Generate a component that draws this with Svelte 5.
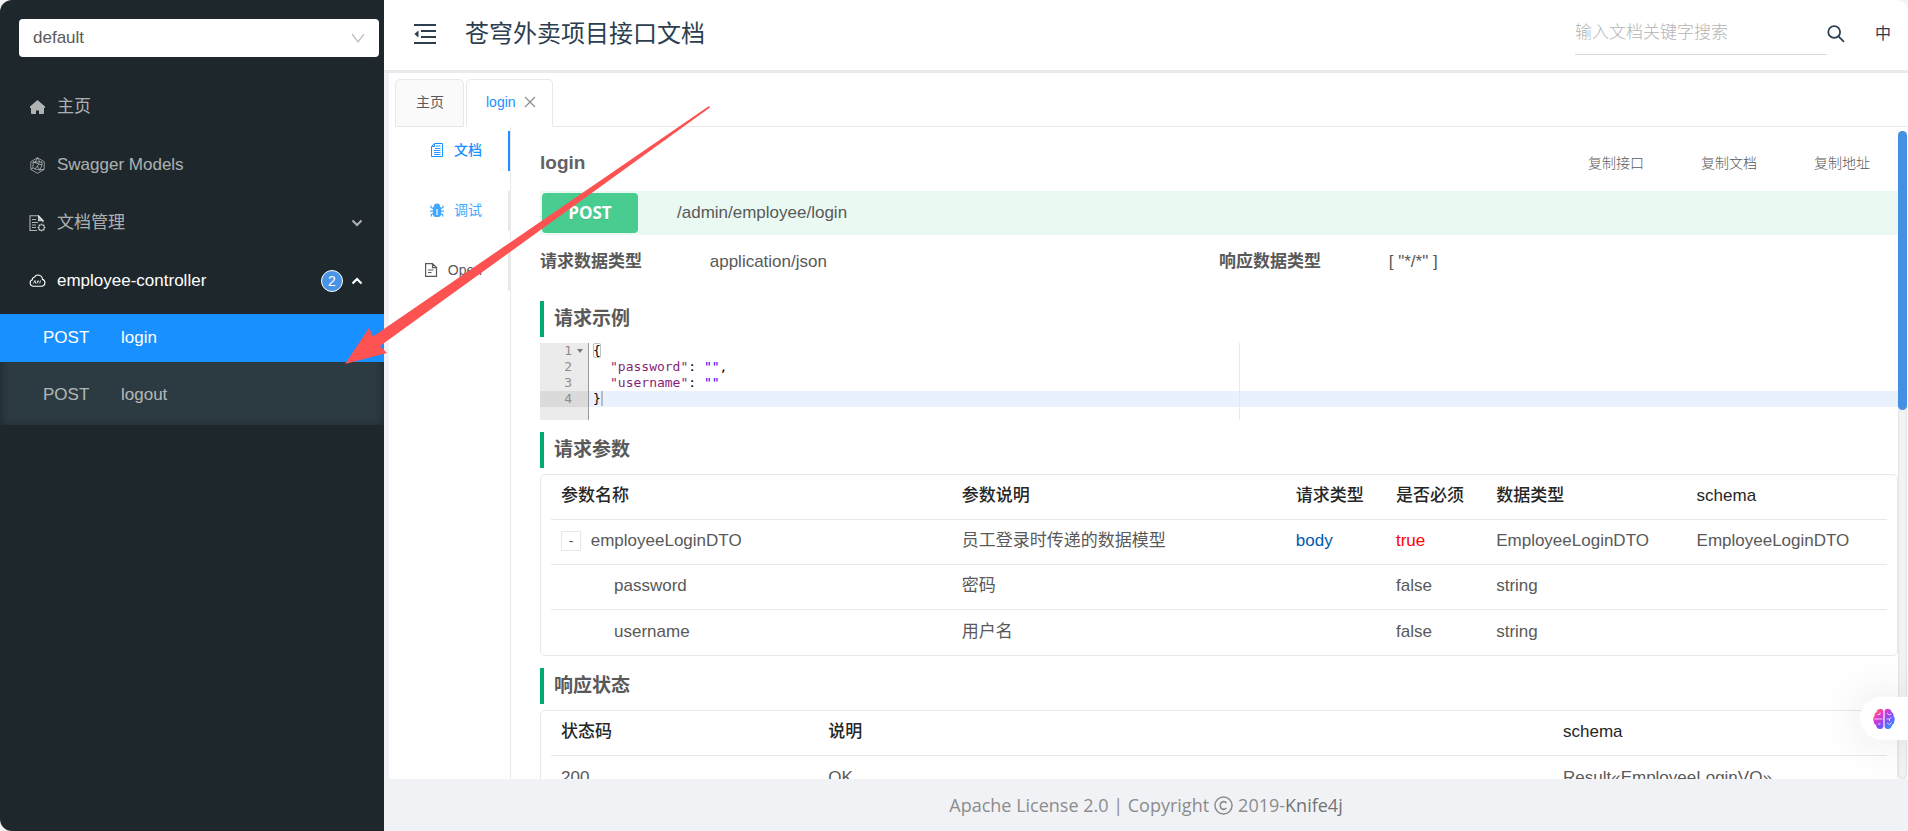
<script>
  let service = $state("default");
  let keyword = $state("");
  let activeApi = $state("login");
  let expanded = $state(true);

  const apis = [
    { method: "POST", name: "login" },
    { method: "POST", name: "logout" },
  ];

  const copyActions = ["复制接口", "复制文档", "复制地址"];

  const params = [
    {
      name: "employeeLoginDTO",
      desc: "员工登录时传递的数据模型",
      in: "body",
      required: true,
      type: "EmployeeLoginDTO",
      schema: "EmployeeLoginDTO",
    },
    { name: "password", desc: "密码", in: "", required: false, type: "string", schema: "", child: true },
    { name: "username", desc: "用户名", in: "", required: false, type: "string", schema: "", child: true },
  ];

  let rows = $derived(params.filter((p) => expanded || !p.child));

  const responses = [{ code: 200, desc: "OK", schema: "Result«EmployeeLoginVO»" }];
</script>

<div class="layout">
  <aside class="sider">
    <div class="service">
      <select bind:value={service} aria-label="service">
        <option>default</option>
      </select>
      <svg class="select-arrow" viewBox="0 0 14 14" width="14" height="14">
        <path d="M1 3l6 8 6-8" fill="none" stroke="#bfbfbf" stroke-width="1.3" />
      </svg>
    </div>

    <nav class="menu">
      <a class="menu-item" href="#home">
        <svg viewBox="0 0 17 17" width="17" height="17">
          <path d="M8.500 1L1 7.500V9h1v5q0 1 1 1h4v-3.500h3V15h4q1 0 1-1V9h1V7.500z" fill="currentColor" />
        </svg>
        <span>主页</span>
      </a>
      <a class="menu-item" href="#models">
        <svg viewBox="0 0 17 17" width="17" height="17" fill="none" stroke="currentColor" stroke-width=".8">
          <path d="M8.500 .8l6.700 3.900v7.700l-6.700 3.900-6.700-3.900V4.700z" />
          <path d="M8.500 .8L6 5.500M8.500 .8L11 5.500M4 5h9v3l-3-1-4 5-2-1zM4 5l6 2M8 9l3 4 2-5M6 12l5 1M2 12.400l2-1.400M15 12.400l-4 .6" />
        </svg>
        <span>Swagger Models</span>
      </a>
      <a class="menu-item" href="#docs">
        <svg viewBox="0 0 17 17" width="17" height="17" fill="none" stroke="currentColor" stroke-width="1.1">
          <path d="M8 15.500H1V.8h8.500L14 5.500v2" />
          <path d="M9.500 .8v5H14z" fill="currentColor" />
          <path d="M3 4.500h4M3 7.500h6M3 10h4M3 12.500h4" />
          <circle cx="12.500" cy="12.500" r="2.800" />
          <path d="M12.500 8.500v1.300M12.500 15.200v1.300M8.500 12.500h1.300M15.200 12.500h1.300M9.700 9.700l.9.900M14.400 14.400l.9.900M9.700 15.300l.9-.9M14.400 10.600l.9-.9" />
        </svg>
        <span class="grow">文档管理</span>
        <svg class="caret" viewBox="0 0 12 12" width="12" height="12">
          <path d="M1.500 3.500L6 8l4.500-4.500" fill="none" stroke="currentColor" stroke-width="2" />
        </svg>
      </a>
      <a class="menu-item open" href="#employee">
        <svg viewBox="0 0 17 17" width="17" height="17" fill="none" stroke="currentColor" stroke-width="1.1">
          <path d="M4 13.200a3.300 3.300 0 0 1-.6-6.400 2.200 2.200 0 0 1 2-2.600 4.300 4.300 0 0 1 8 2.200 3.500 3.500 0 0 1-.4 6.800z" />
          <path d="M4.500 10.500l1.500-3 .8 3M8 10.500l.8-2.700 1 .5-1 1M11.500 7.500l-.8 3" stroke-width=".8" />
        </svg>
        <span class="grow">employee-controller</span>
        <span class="badge">2</span>
        <svg class="caret" viewBox="0 0 12 12" width="12" height="12">
          <path d="M1.500 8.500L6 4l4.500 4.500" fill="none" stroke="currentColor" stroke-width="2.200" />
        </svg>
      </a>
      <div class="submenu">
        {#each apis as api}
          <a
            class="sub-item"
            class:active={activeApi === api.name}
            href="#{api.name}"
            onclick={() => (activeApi = api.name)}
          >
            <span class="method">{api.method}</span>
            <span>{api.name}</span>
          </a>
        {/each}
      </div>
    </nav>
  </aside>

  <div class="main">
    <header>
      <button class="icon-btn" aria-label="menu fold">
        <svg viewBox="0 0 22 20" width="22" height="20" fill="none" stroke="currentColor" stroke-width="1.800">
          <path d="M0 1h22M7 7h15M7 13h15M0 19h22" />
          <path d="M4.500 6.500v7L.3 10z" fill="currentColor" stroke="none" />
        </svg>
      </button>
      <h1>苍穹外卖项目接口文档</h1>
      <input class="search" type="text" placeholder="输入文档关键字搜索" aria-label="search" bind:value={keyword} />
      <button class="icon-btn" aria-label="search">
        <svg viewBox="0 0 18 18" width="18" height="18" fill="none" stroke="currentColor" stroke-width="1.800">
          <circle cx="7.200" cy="7" r="5.900" />
          <path d="M11.500 11.300l5.500 5.500" />
        </svg>
      </button>
      <button class="lang">中</button>
    </header>

    <div class="page">
      <div class="tabs">
        <button class="tab">主页</button>
        <button class="tab current">
          login
          <svg viewBox="0 0 12 12" width="12" height="12">
            <path d="M1 1l10 10M11 1L1 11" stroke="#8c8c8c" stroke-width="1.200" />
          </svg>
        </button>
        <div class="tabs-rest"></div>
      </div>

      <div class="workspace">
        <div class="side-tabs">
          <button class="side-tab selected">
            <svg viewBox="0 0 14 14" width="14" height="14" fill="none" stroke="currentColor">
              <path d="M4.500 .5h8v13H9.500M4.500 .5l-3 3v10h9M4.500 .5v3h-3" />
              <path d="M5.500 3h5M5 5.500h5.500M4 7.500h6.500M4 9.500h6.500M4 11.500h6.500" stroke-width=".9" />
            </svg>
            文档
          </button>
          <button class="side-tab hover">
            <svg viewBox="0 0 14 14" width="14" height="14" fill="none" stroke="currentColor" stroke-width="1.200">
              <path d="M3.500 4.500h7V11a3.500 2.500 0 0 1-7 0z" fill="currentColor" />
              <path d="M4.500 3.500a2.500 2.500 0 0 1 5 0z" fill="currentColor" />
              <path d="M3 5.500L1 4.500V2.500M11 5.500l2-1V2.500M3 8.200H0M11 8.200h3M3.500 10.500L1.300 11.500v2M10.500 10.500l2.200 1v2" />
              <path d="M7 6v6" stroke="#fff" />
            </svg>
            调试
          </button>
          <button class="side-tab">
            <svg viewBox="0 0 14 14" width="14" height="14" fill="none" stroke="currentColor" stroke-width="1.200">
              <path d="M1.600 .6H8.500l4 4v8.800H1.600zM8.500 .6v4h4" />
              <path d="M4 7h5.500M4 9.500h3.500" />
            </svg>
            Open
          </button>
        </div>

        <div class="content">
          <div class="title-row">
            <h2>login</h2>
            {#each copyActions as action}
              <button class="copy">{action}</button>
            {/each}
          </div>

          <div class="api-bar">
            <span class="verb">POST</span>
            <span>/admin/employee/login</span>
          </div>

          <dl class="types">
            <dt>请求数据类型</dt>
            <dd>application/json</dd>
            <dt>响应数据类型</dt>
            <dd>[ "*/*" ]</dd>
          </dl>

          <h3>请求示例</h3>
          <div class="editor">
            <div class="gutter">
              <div>1<i class="fold"></i></div>
              <div>2</div>
              <div>3</div>
              <div class="line-on">4</div>
            </div>
            <div class="code">
              <div><span class="bracket">{"{"}</span></div>
              <div class="indent"><span class="key">"password"</span>: <span class="str">""</span>,</div>
              <div class="indent"><span class="key">"username"</span>: <span class="str">""</span></div>
              <div class="line-on">{"}"}<span class="cursor"></span></div>
              <div class="print-margin"></div>
            </div>
          </div>

          <h3>请求参数</h3>
          <div class="card">
            <table>
              <thead>
                <tr>
                  <th class="w30">参数名称</th>
                  <th class="w25">参数说明</th>
                  <th class="w7">请求类型</th>
                  <th class="w7">是否必须</th>
                  <th class="w15">数据类型</th>
                  <th class="w15">schema</th>
                </tr>
              </thead>
              <tbody>
                {#each rows as row}
                  <tr>
                    <td class:child={row.child}>
                      {#if !row.child}
                        <button class="expand" onclick={() => (expanded = !expanded)}>{expanded ? "-" : "+"}</button>
                      {/if}
                      {row.name}
                    </td>
                    <td>{row.desc}</td>
                    <td class="in-body">{row.in}</td>
                    <td class:required={row.required}>{row.required}</td>
                    <td>{row.type}</td>
                    <td>{row.schema}</td>
                  </tr>
                {/each}
              </tbody>
            </table>
          </div>

          <h3>响应状态</h3>
          <div class="card">
            <table>
              <thead>
                <tr>
                  <th class="w20">状态码</th>
                  <th class="w55">说明</th>
                  <th class="w25">schema</th>
                </tr>
              </thead>
              <tbody>
                {#each responses as res}
                  <tr>
                    <td>{res.code}</td>
                    <td>{res.desc}</td>
                    <td>{res.schema}</td>
                  </tr>
                {/each}
              </tbody>
            </table>
          </div>
        </div>

        <div class="scrollbar"><div class="thumb"></div></div>
      </div>
    </div>

    <footer>
      <span>Apache License 2.0 | Copyright</span>
      <svg viewBox="0 0 20 20" width="19" height="19" fill="none" stroke="currentColor" stroke-width="1.600">
        <circle cx="10" cy="10" r="9" />
        <path d="M13 7.500a3.600 4 0 1 0 0 5" stroke-width="1.800" />
      </svg>
      <span>2019-<a href="#knife4j">Knife4j</a></span>
    </footer>
  </div>

  <svg class="pointer" viewBox="0 0 365 258" width="365" height="258">
    <path d="M364 0L28 230.500 24 222 0 258l42-11-7-7L365 1.500z" fill="#fc5252" />
  </svg>

  <button class="assistant" aria-label="assistant">
    <svg viewBox="0 0 22 22" width="22" height="22">
      <defs>
        <linearGradient id="brain" x1="0" y1="0" x2="1" y2="1">
          <stop offset="0" stop-color="#ff9a1f" />
          <stop offset=".28" stop-color="#f037c0" />
          <stop offset=".6" stop-color="#7c4dff" />
          <stop offset="1" stop-color="#19b5ff" />
        </linearGradient>
      </defs>
      <path
        d="M10.400 2.500Q9 0 6.500 1 4 1 3.500 4 1 5 1.500 8-.5 10 .6 13 .5 16 3 17q.5 4 4 4 2.500.5 3.400-2zM11.600 2.500Q13 0 15.500 1q2.500 0 3 3 2.500 1 2 4 2 2 .9 5 .1 3-2.400 4-.5 4-4 4-2.500.5-3.400-2z"
        fill="url(#brain)"
      />
      <path
        d="M4.500 6.500h2.500V4.500M1.500 11h8M5 16h2.500M14 5l2 2 2.500-1M13.500 11l3 0 2-2M14 15l2.500 1.500 2-2M16.500 11v2"
        fill="none"
        stroke="#f3d9ff"
        stroke-width=".9"
      />
    </svg>
  </button>
</div>

<style>
  :global(body) {
    background: #f4f4f4;
  }
  .layout {
    position: relative;
    display: flex;
    height: 100vh;
    overflow: hidden;
    border-radius: 12px;
    background: #f0f2f5;
    color: #595959;
    font-family: "Liberation Sans", "Noto Sans CJK SC", sans-serif;
    font-size: 17px;
    line-height: 24px;
  }
  button,
  input,
  select {
    margin: 0;
    padding: 0;
    border: none;
    background: none;
    color: inherit;
    font: inherit;
  }
  button {
    cursor: pointer;
  }
  a {
    color: inherit;
    text-decoration: none;
  }
  svg {
    flex: none;
  }
  .grow {
    flex: 1;
  }

  /* sidebar */
  .sider {
    flex: none;
    width: 384px;
    background: #1e282c;
  }
  .service {
    position: relative;
    padding: 19px 5px 0 19px;
  }
  .service select {
    appearance: none;
    display: block;
    width: 100%;
    height: 38px;
    padding: 0 14px;
    border-radius: 4px;
    background: #fff;
  }
  .select-arrow {
    position: absolute;
    right: 19px;
    top: 31px;
  }
  .menu {
    margin-top: 26px;
    color: rgba(255, 255, 255, 0.65);
  }
  .menu-item {
    display: flex;
    align-items: center;
    height: 48px;
    margin-bottom: 10px;
    padding: 0 21px 0 29px;
  }
  .menu-item > svg:first-child {
    margin-right: 11px;
  }
  .menu-item.open {
    margin-bottom: 9px;
    color: #fff;
  }
  .badge {
    width: 20px;
    height: 20px;
    margin-right: 8px;
    border: 1px solid #fff;
    border-radius: 50%;
    background: #4a94e8;
    font-size: 14px;
    line-height: 20px;
    text-align: center;
  }
  .submenu {
    padding-bottom: 6px;
    background: #2c3b41;
    box-shadow: inset 0 2px 10px rgba(0, 0, 0, 0.4);
  }
  .sub-item {
    display: flex;
    align-items: center;
    height: 48px;
    padding-left: 43px;
  }
  .sub-item + .sub-item {
    margin-top: 9px;
  }
  .sub-item.active {
    background: #1890ff;
    color: #fff;
  }
  .method {
    width: 78px;
  }

  /* header */
  .main {
    flex: 1;
    min-width: 0;
    display: flex;
    flex-direction: column;
  }
  header {
    display: flex;
    align-items: center;
    height: 67px;
    padding: 0 17px 3px 0;
    border-bottom: 3px solid #e8eaee;
    background: #fff;
    color: #2c3e50;
  }
  header .icon-btn {
    display: flex;
  }
  header .icon-btn:first-child {
    margin-left: 30px;
  }
  h1 {
    flex: 1;
    margin: 0 0 0 29px;
    font-size: 24px;
    font-weight: 400;
    line-height: 36px;
  }
  .search {
    width: 252px;
    height: 42px;
    border-bottom: 1px solid #d9d9d9;
    outline: none;
    font-weight: 300;
  }
  .search::placeholder {
    color: #b4b4b4;
  }
  .lang {
    margin-left: 30px;
    font-size: 16px;
  }

  /* opened pages */
  .page {
    flex: 1;
    min-height: 0;
    display: flex;
    flex-direction: column;
    margin-left: 5px;
    background: #fff;
  }
  .tabs {
    display: flex;
    height: 48px;
    padding: 6px 1px 0 6px;
    font-size: 14px;
  }
  .tab {
    display: flex;
    align-items: center;
    gap: 8px;
    padding: 0 19px 2px 20px;
    border: 1px solid #e8e8e8;
    border-radius: 5px 5px 0 0;
    background: #fafafa;
  }
  .tab.current {
    padding: 0 16px 2px 19px;
    border-bottom-color: #fff;
    background: #fff;
    color: #1890ff;
  }
  .tab + .tab {
    margin-left: 2px;
  }
  .tabs-rest {
    flex: 1;
    border-bottom: 1px solid #e8e8e8;
  }
  .workspace {
    flex: 1;
    min-height: 0;
    display: flex;
    padding-right: 1px;
  }
  .side-tabs {
    flex: none;
    width: 121px;
    padding-top: 4px;
    border-right: 1px solid #e8e8e8;
    font-size: 14px;
  }
  .side-tab {
    display: flex;
    align-items: center;
    justify-content: flex-end;
    gap: 10px;
    width: 100%;
    height: 40px;
    margin-bottom: 20px;
    padding: 0 26px 2px 0;
    border-right: 2px solid #e8e8e8;
  }
  .side-tab.selected {
    border-right-color: #1890ff;
    color: #1890ff;
    font-weight: 500;
  }
  .side-tab.hover {
    color: #40a9ff;
  }

  /* api document */
  .content {
    flex: 1;
    min-width: 0;
    overflow-y: auto;
    scrollbar-width: none;
    margin-left: 29px;
  }
  .title-row {
    display: flex;
    align-items: center;
    padding: 22px 0 14px;
  }
  h2 {
    flex: 1;
    margin: 0;
    color: #606266;
    font-size: 19px;
    line-height: 28px;
  }
  .copy {
    padding: 0 28px 0 29px;
    font-size: 14px;
    font-weight: 300;
  }
  .api-bar {
    display: flex;
    align-items: center;
    gap: 39px;
    padding: 2px;
    background: #eaf9f2;
  }
  .verb {
    width: 96px;
    border-radius: 4px;
    background: #49cc90;
    color: #fff;
    font-family: "Open Sans", "Noto Sans", sans-serif;
    font-weight: 700;
    line-height: 40px;
    text-align: center;
    text-shadow: 0 1px 0 rgba(0, 0, 0, 0.1);
  }
  .types {
    display: grid;
    grid-template-columns: 1fr 3fr 1fr 3fr;
    margin: 0;
    padding: 15px 0 27px;
  }
  dt {
    font-weight: 700;
  }
  dd {
    margin: 0;
  }
  h3 {
    margin: 0 0 6px;
    padding-left: 10px;
    border-left: 4px solid #00ab6d;
    font-size: 19px;
    line-height: 36px;
  }
  .editor {
    display: flex;
    margin-bottom: 12px;
    font-family: "DejaVu Sans Mono", monospace;
    font-size: 13px;
    line-height: 16px;
  }
  .gutter {
    flex: none;
    width: 48px;
    height: 77px;
    border-right: 1px solid #999;
    background: #ebebeb;
    color: #8c8c8c;
  }
  .gutter div {
    position: relative;
    padding-right: 16px;
    text-align: right;
  }
  .gutter .line-on {
    background: #dadada;
  }
  .fold {
    position: absolute;
    right: 5px;
    top: 6px;
    border: 3px solid transparent;
    border-top: 4px solid #777;
  }
  .code {
    position: relative;
    flex: 1;
    color: #000;
  }
  .code > div {
    padding-left: 4px;
  }
  .code .indent {
    padding-left: 21px;
  }
  .code .line-on {
    background: #e8f1fd;
  }
  .code .print-margin {
    position: absolute;
    left: 650px;
    top: 0;
    bottom: 0;
    padding: 0;
    border-left: 1px solid #e8e8e8;
  }
  .bracket {
    border-radius: 2px;
    box-shadow: inset 0 0 0 1px #c0c0c0;
  }
  .key {
    color: #871f78;
  }
  .str {
    color: #2a00ff;
  }
  .cursor {
    border-left: 2px solid #b4bcc6;
  }
  .card {
    margin-bottom: 12px;
    padding: 0 10px;
    border: 1px solid #e8e8e8;
    border-radius: 5px;
  }
  table {
    width: 100%;
    border-collapse: separate;
    border-spacing: 0;
    table-layout: fixed;
  }
  th,
  td {
    box-sizing: border-box;
    height: 45px;
    padding: 0 0 2px 10px;
    border-bottom: 1px solid #e8e8e8;
    text-align: left;
    white-space: nowrap;
  }
  th {
    color: #262626;
    font-weight: 500;
  }
  tr:last-child td {
    border-bottom: none;
  }
  td.child {
    padding-left: 63px;
  }
  .w7 {
    width: 7.5%;
  }
  .w15 {
    width: 15%;
  }
  .w20 {
    width: 20%;
  }
  .w25 {
    width: 25%;
  }
  .w30 {
    width: 30%;
  }
  .w55 {
    width: 55%;
  }
  thead th {
    border-bottom: 1px solid #e8e8e8;
  }
  .in-body {
    color: #0058b3;
  }
  .required {
    color: #f00;
  }
  .expand {
    width: 20px;
    height: 20px;
    margin-right: 5px;
    border: 1px solid #e8e8e8;
    font-size: 14px;
    line-height: 16px;
  }
  .scrollbar {
    flex: none;
    width: 9px;
    margin-top: 4px;
    border-radius: 5px;
    background: #f2f2f2;
    box-shadow: inset 0 0 2px rgba(0, 0, 0, 0.2);
  }
  .thumb {
    height: 43%;
    border-radius: 5px;
    background: #4490e2;
  }

  footer {
    display: flex;
    align-items: center;
    justify-content: center;
    gap: 5px;
    height: 52px;
    background: #f0f2f5;
    color: #8c8c8c;
    font-family: "Open Sans", "Noto Sans", sans-serif;
    font-size: 18px;
  }
  footer a {
    color: #737373;
  }

  /* overlays */
  .pointer {
    position: absolute;
    left: 345px;
    top: 106px;
    pointer-events: none;
  }
  .assistant {
    position: absolute;
    right: 0;
    bottom: 91px;
    display: flex;
    align-items: center;
    width: 48px;
    height: 43px;
    padding-left: 13px;
    border-radius: 22px 0 0 22px;
    background: #fff;
    box-shadow: 0 0 50px rgba(0, 0, 0, 0.12);
  }
</style>
